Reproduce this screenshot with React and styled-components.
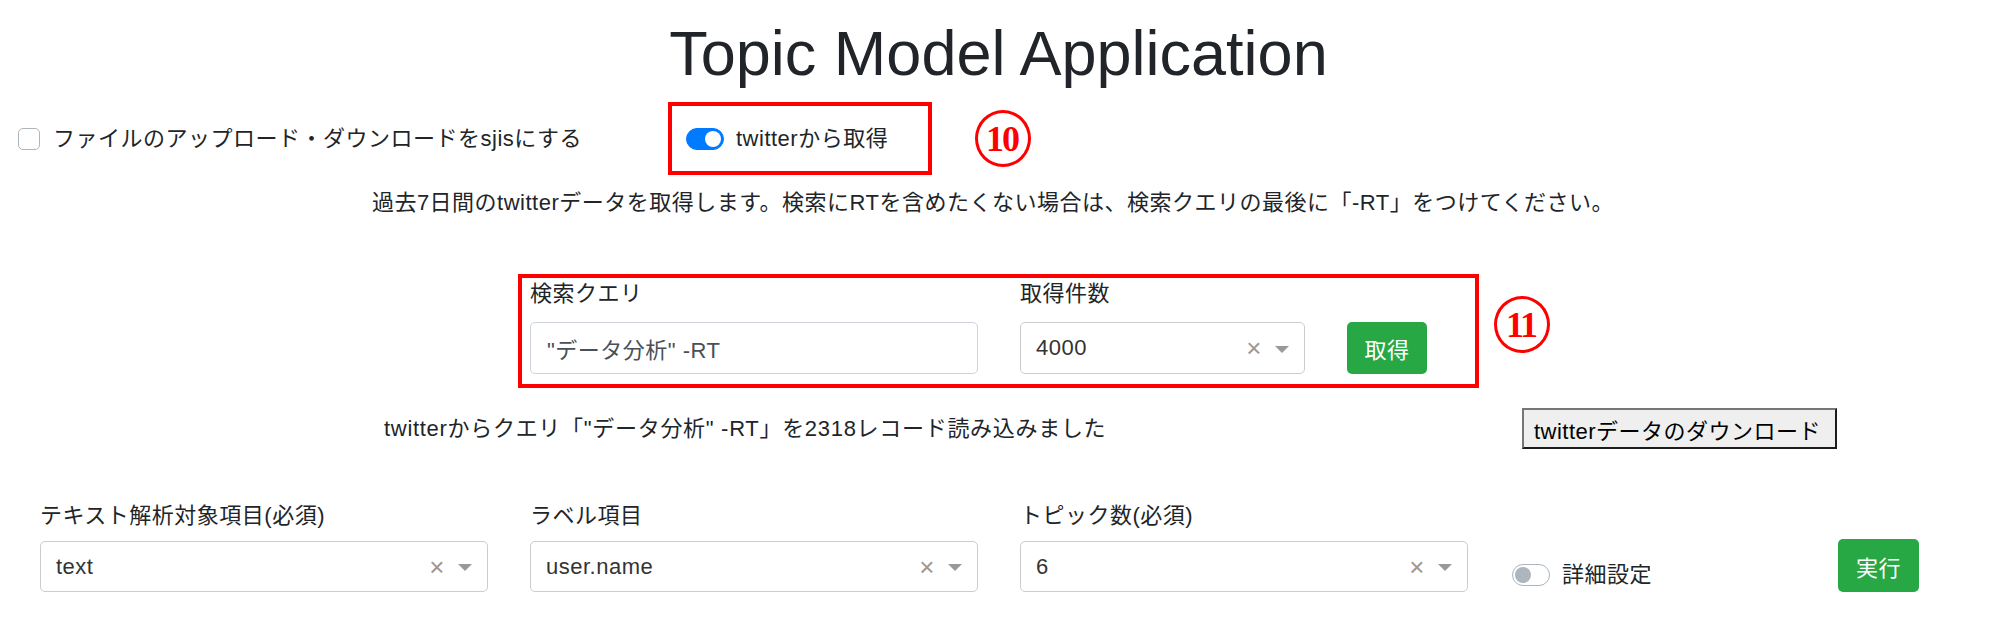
import styled, { createGlobalStyle } from 'styled-components';

const GlobalStyle = createGlobalStyle`
  body {
    margin: 0;
    background: #fff;
    color: #212529;
    font-family: 'Liberation Sans', 'Noto Sans CJK JP', sans-serif;
    font-size: 22px;
    letter-spacing: 0.5px;
  }
  * {
    box-sizing: border-box;
  }
`;

const Page = styled.div`
  width: 2002px;
`;

const Title = styled.h1`
  margin: 17px 0 0;
  font-size: 63px;
  line-height: 73px;
  font-weight: 400;
  letter-spacing: 0;
  text-align: center;
  padding-right: 5px;
`;

const TopRow = styled.div`
  display: flex;
  align-items: center;
  height: 73px;
  margin-top: 12px;
`;

const CheckCell = styled.label`
  flex: 0 0 668px;
  padding-left: 18px;
  display: flex;
  align-items: center;
  gap: 13px;
  line-height: 30px;
`;

const Checkbox = styled.span`
  width: 22px;
  height: 22px;
  border: 1px solid #adb5bd;
  border-radius: 5px;
  background: #fff;
`;

const AnnotBox = styled.div`
  border: 4px solid #ff0000;
`;

const TwitterBox = styled(AnnotBox)`
  width: 264px;
  height: 73px;
  display: flex;
  align-items: center;
  padding-left: 14px;
`;

const SwitchLabel = styled.label`
  display: flex;
  align-items: center;
  gap: 12px;
  line-height: 30px;
`;

const Toggle = styled.span`
  position: relative;
  width: 38px;
  height: 22px;
  border-radius: 11px;
  border: 1px solid ${({ $on }) => ($on ? '#007bff' : '#adb5bd')};
  background: ${({ $on }) => ($on ? '#007bff' : '#fff')};
  &::after {
    content: '';
    position: absolute;
    top: 2px;
    left: ${({ $on }) => ($on ? '18px' : '2px')};
    width: 16px;
    height: 16px;
    border-radius: 50%;
    background: ${({ $on }) => ($on ? '#fff' : '#adb5bd')};
  }
`;

const Circled = styled.span`
  width: 56px;
  height: 57px;
  border: 3px solid #ff0000;
  border-radius: 50%;
  display: flex;
  align-items: center;
  justify-content: center;
  color: #ff0000;
  font-family: 'Liberation Serif', serif;
  font-weight: 700;
  font-size: 36px;
  letter-spacing: -2px;
  padding-right: 2px;
  margin-left: ${({ $ml }) => $ml}px;
  margin-top: ${({ $mt }) => $mt || 0}px;
  flex: none;
`;

const Description = styled.p`
  margin: 11px 0 0;
  line-height: 33px;
  text-align: center;
  padding-right: 16px;
`;

const QueryRow = styled.div`
  display: flex;
  align-items: flex-start;
  margin-top: 55px;
  padding-left: 518px;
`;

const QueryBox = styled(AnnotBox)`
  display: grid;
  grid-template-columns: 448px 285px 80px;
  grid-template-rows: 30px 52px;
  column-gap: 42px;
  row-gap: 13px;
  padding: 1px 48px 10px 8px;
`;

const FieldLabel = styled.div`
  line-height: 30px;
  white-space: nowrap;
`;

const TextInput = styled.input`
  width: 100%;
  height: 52px;
  border: 1px solid #ced4da;
  border-radius: 5px;
  padding: 0 16px;
  font: inherit;
  letter-spacing: inherit;
  color: #495057;
  background: #fff;
  outline: none;
`;

const SelectBox = styled.div`
  height: ${({ $h }) => $h || 51}px;
  border: 1px solid #cccccc;
  border-radius: 5px;
  background: #fff;
  display: flex;
  align-items: center;
  padding: 0 15px 0 15px;
  color: #333;
`;

const SelectValue = styled.span`
  flex: 1;
`;

const Clear = styled.span`
  color: #999;
  font-size: 26px;
  line-height: 1;
  margin-right: 13px;
`;

const Arrow = styled.span`
  width: 0;
  height: 0;
  border-top: 7px solid #999;
  border-left: 7px solid transparent;
  border-right: 7px solid transparent;
  margin-top: 2px;
`;

const GreenButton = styled.button`
  width: ${({ $w }) => $w}px;
  height: ${({ $h }) => $h}px;
  border: none;
  border-radius: 5px;
  background: #28a745;
  color: #fff;
  font: inherit;
  letter-spacing: inherit;
  padding: 0;
`;

const StatusRow = styled.div`
  display: flex;
  align-items: center;
  height: 41px;
  margin-top: 20px;
`;

const StatusText = styled.div`
  flex: 0 0 1522px;
  padding-left: 384px;
  line-height: 33px;
  letter-spacing: 0.7px;
`;

const DownloadButton = styled.button`
  width: 315px;
  height: 41px;
  background: #efefef;
  border: 2px solid;
  border-color: #767676 #1c1c1c #1c1c1c #767676;
  font: inherit;
  letter-spacing: inherit;
  color: #000;
  padding: 0 4px 0 0;
`;

const FormRow = styled.div`
  display: grid;
  grid-template-columns: repeat(4, 490px);
  padding-left: 19px;
  margin-top: 52px;
`;

const Field = styled.div`
  padding: 0 21px;
  display: flex;
  flex-direction: column;
  gap: 10px;
`;

const ActionCell = styled.div`
  padding: 0 60px 0 23px;
  display: flex;
  align-items: flex-end;
  justify-content: space-between;
`;

const BottomSwitch = styled(SwitchLabel)`
  margin-bottom: 2px;
`;

const Select = ({ value, h }) => (
  <SelectBox $h={h}>
    <SelectValue>{value}</SelectValue>
    <Clear>×</Clear>
    <Arrow />
  </SelectBox>
);

const App = () => {
  return (
    <Page>
      <GlobalStyle />
      <Title>Topic Model Application</Title>
      <TopRow>
        <CheckCell>
          <Checkbox />
          ファイルのアップロード・ダウンロードをsjisにする
        </CheckCell>
        <TwitterBox>
          <SwitchLabel>
            <Toggle $on />
            twitterから取得
          </SwitchLabel>
        </TwitterBox>
        <Circled $ml={43}>10</Circled>
      </TopRow>
      <Description>
        過去7日間のtwitterデータを取得します。検索にRTを含めたくない場合は、検索クエリの最後に「-RT」をつけてください。
      </Description>
      <QueryRow>
        <QueryBox>
          <FieldLabel>検索クエリ</FieldLabel>
          <FieldLabel>取得件数</FieldLabel>
          <div />
          <TextInput readOnly value={'"データ分析" -RT'} />
          <Select value="4000" h={52} />
          <GreenButton $w={80} $h={52}>取得</GreenButton>
        </QueryBox>
        <Circled $ml={15} $mt={22}>11</Circled>
      </QueryRow>
      <StatusRow>
        <StatusText>twitterからクエリ「"データ分析" -RT」を2318レコード読み込みました</StatusText>
        <DownloadButton>twitterデータのダウンロード</DownloadButton>
      </StatusRow>
      <FormRow>
        <Field>
          <FieldLabel>テキスト解析対象項目(必須)</FieldLabel>
          <Select value="text" />
        </Field>
        <Field>
          <FieldLabel>ラベル項目</FieldLabel>
          <Select value="user.name" />
        </Field>
        <Field>
          <FieldLabel>トピック数(必須)</FieldLabel>
          <Select value="6" />
        </Field>
        <ActionCell>
          <BottomSwitch>
            <Toggle />
            詳細設定
          </BottomSwitch>
          <GreenButton $w={81} $h={53}>実行</GreenButton>
        </ActionCell>
      </FormRow>
    </Page>
  );
};

export default App;
